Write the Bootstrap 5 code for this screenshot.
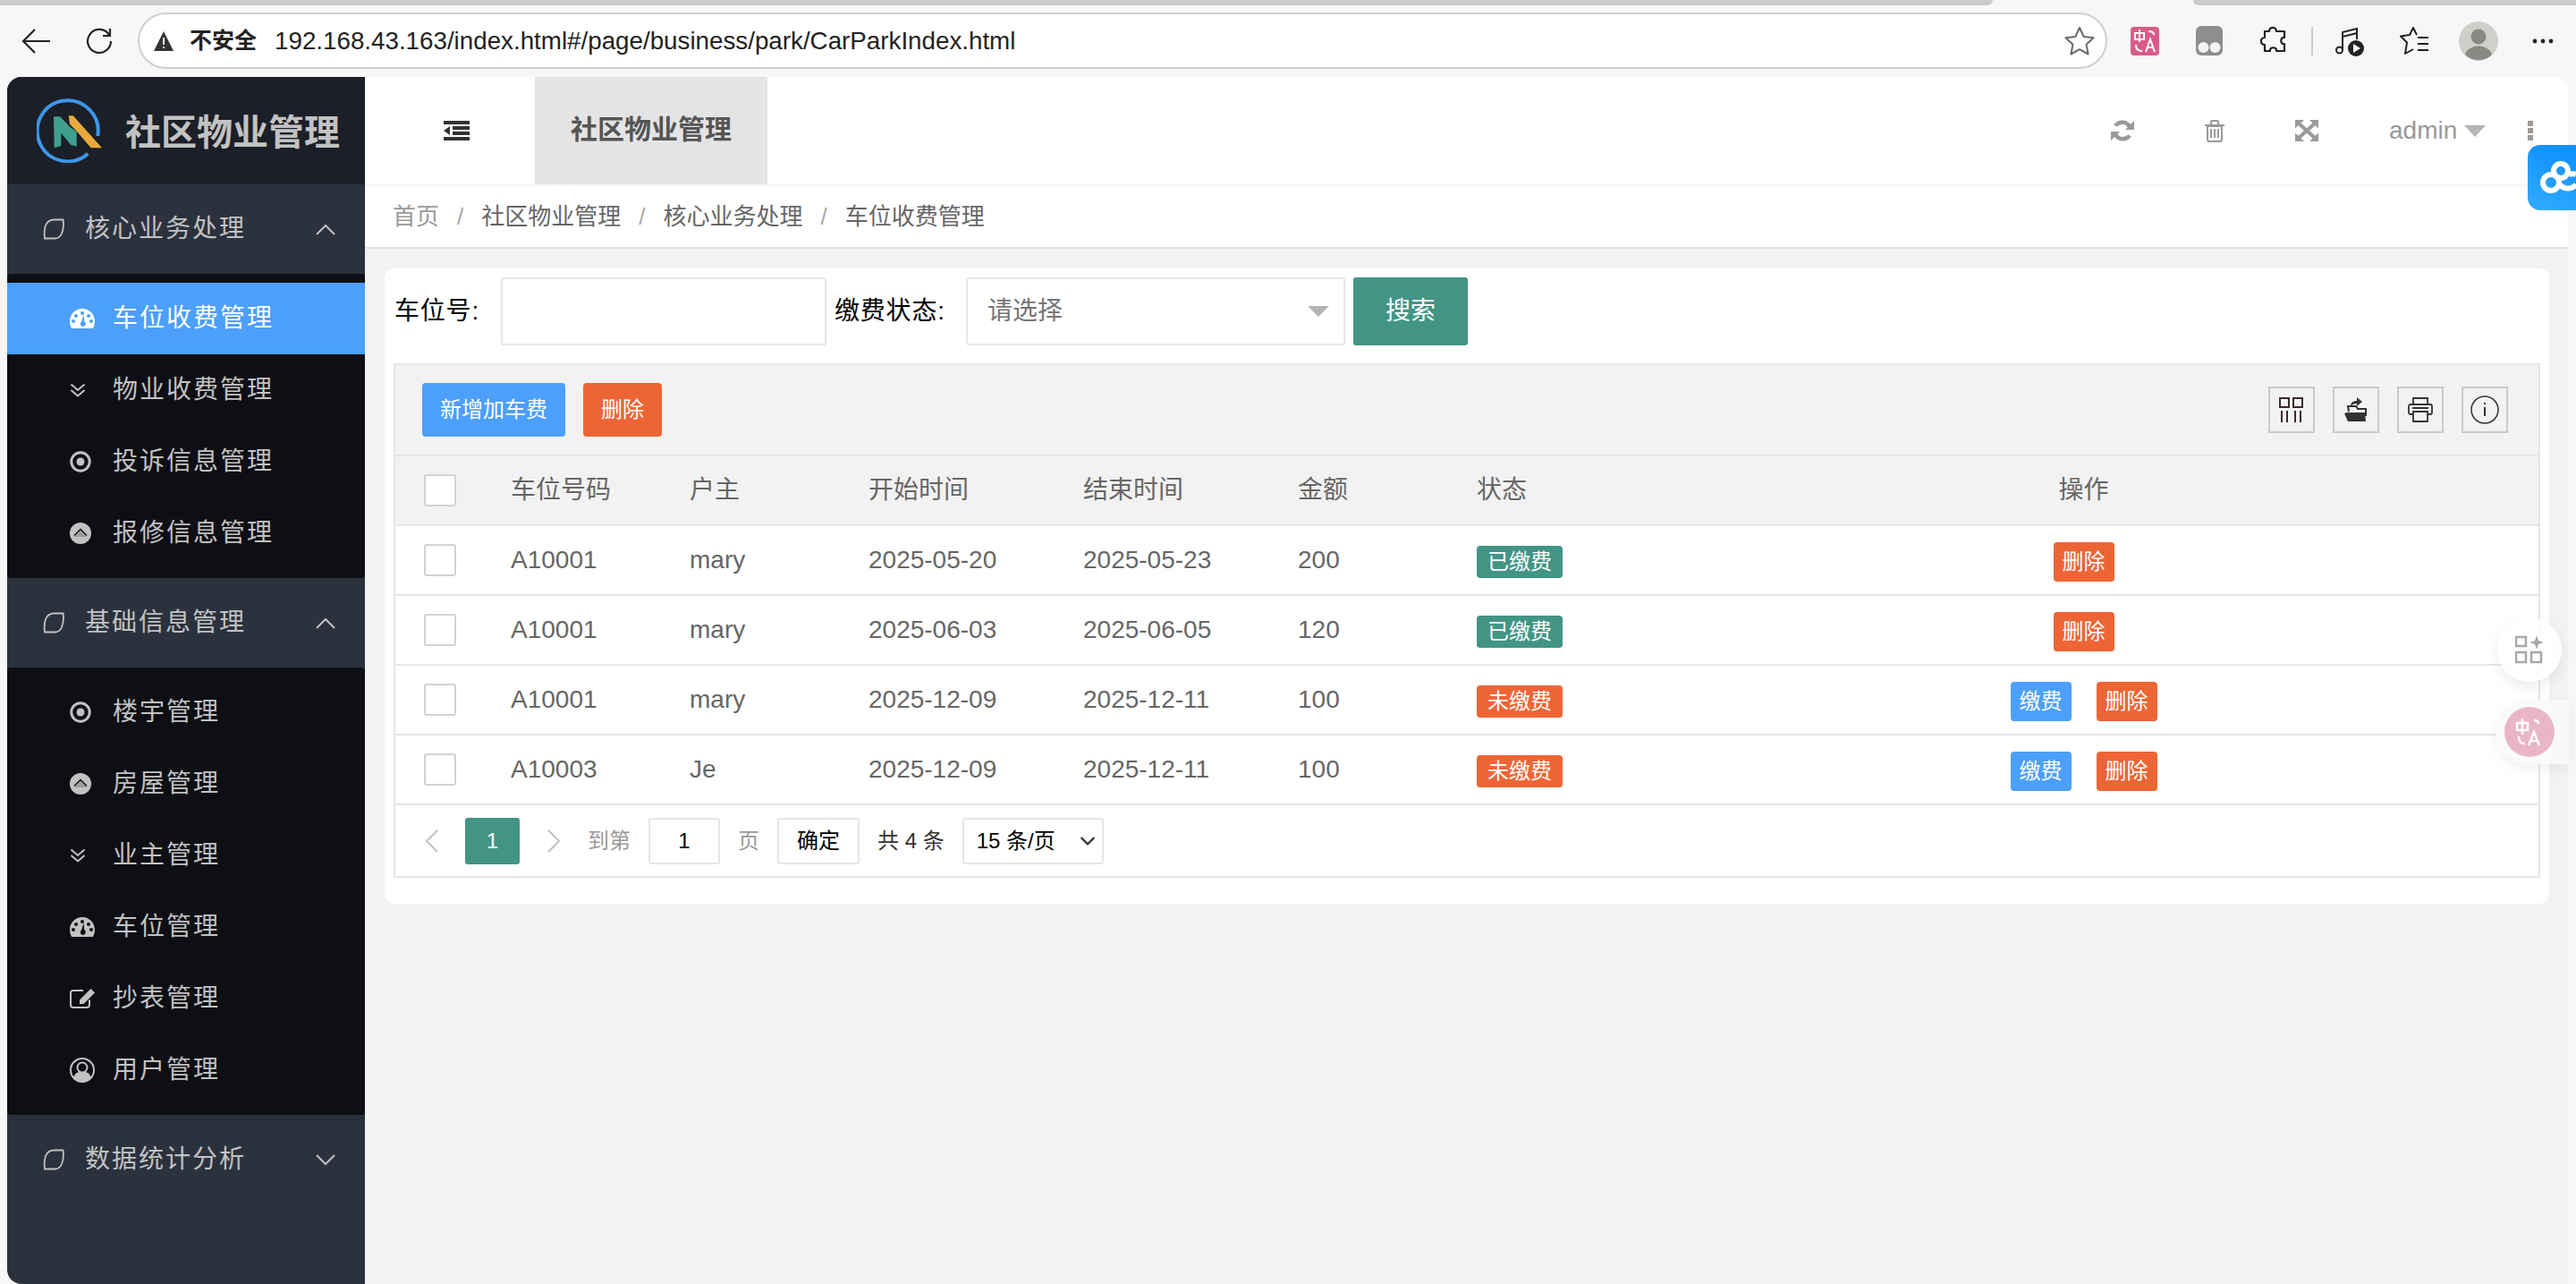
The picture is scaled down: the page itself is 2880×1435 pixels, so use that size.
<!DOCTYPE html>
<html lang="zh-CN">
<head>
  <meta charset="UTF-8">
  <title>社区物业管理</title>
  <link href="https://cdn.jsdelivr.net/npm/bootstrap@5.3.3/dist/css/bootstrap.min.css" rel="stylesheet">
  <style>
    html, body { height: 100%; }
    body { background: #f7f7f7; font-family: "Liberation Sans", "Noto Sans CJK SC", sans-serif; font-size: 28px; color: #666; overflow: hidden; position: relative; }

    /* browser frame */
    .tab-strip { height: 6px; }
    .tab-strip .tab-gray { background: #cbcbcb; }
    .tab-strip .tab-left { width: 2228px; border-bottom-right-radius: 6px; }
    .tab-strip .tab-right { border-bottom-left-radius: 6px; margin-left: 224px; }
    .chrome-bar { height: 80px; padding-top: 8px; padding-bottom: 9px; }
    .chrome-nav { width: 154px; flex: none; }
    .nav-back { margin-left: 24px; }
    .nav-reload { margin-left: 40px; }
    .url-box { width: 2202px; height: 63px; flex: none; background: #fff; border: 2px solid #cfcfcf; border-radius: 32px; padding: 0 12px 0 15px; color: #222; font-size: 27.75px; }
    .url-warn { font-size: 25px; font-weight: 700; margin-left: 17px; margin-right: 20px; }
    .ext-icons { margin-left: 26px; flex: none; }
    .ext-slot { width: 72.5px; flex: none; }
    .ext-div { width: 2px; height: 32px; background: #ccc; flex: none; margin: 0 5px 0 -16px; }
    .ext-wide { width: 72px; flex: none; }
    .app-frame { height: 1349px; padding: 0 9px 0 8px; }

    /* sidebar */
    .side-nav { width: 400px; flex: none; background: #2b323e; border-radius: 16px 0 0 16px; overflow: hidden; color: #c2c2c2; }
    .brand-row { height: 120px; background: #1b1f27; padding-left: 33px; gap: 23px; font-size: 40px; font-weight: 700; }
    .brand-row span { padding-top: 4px; }
    .menu-head { height: 100px; padding-left: 40px; padding-right: 33px; letter-spacing: 2px; }
    .menu-head span { margin-left: 23px; }
    .menu-sub { background: #0d0f14; border-radius: 4px; padding: 10px 0; }
    .menu-item { height: 80px; padding-left: 70px; letter-spacing: 2px; }
    .menu-item.is-on { background: #4c9ffa; color: #fff; }
    .menu-ico { width: 48px; flex: none; }

    /* header */
    .main-pane { min-width: 0; background: #f2f2f2; border-top-right-radius: 16px; }
    .top-bar { height: 122px; flex: none; background: #fff; border-bottom: 2px solid #f5f5f5; border-top-right-radius: 16px; color: #999; }
    .fold-btn { width: 190px; padding-left: 14px; color: #333; }
    .page-tab { width: 260px; background: #e4e4e4; color: #555; font-size: 30px; font-weight: 600; padding-bottom: 3px; }
    .top-tool { width: 103px; }
    .top-user { width: 170px; padding-left: 41px; gap: 8px; }
    .tri-down { width: 0; height: 0; border-style: solid; border-color: #b5b5b5 transparent transparent; border-width: 13px 12px 0; }
    .top-more { width: 71px; padding-right: 14px; }
    .crumb-bar { height: 70px; flex: none; background: #fff; border-bottom: 2px solid #e2e2e2; padding-left: 31px; font-size: 26px; color: #666; }
    .crumb-home { color: #999; }
    .crumb-sep { color: #aaa; margin: 0 20px; }

    /* content */
    .content-area { padding: 22px 21px 0 22px; }
    .panel-box { background: #fff; border-radius: 10px; padding: 10px 10px 29px; }
    .search-row { height: 76px; margin-bottom: 20px; color: #000; }
    .field-lbl { flex: none; padding-left: 1px; letter-spacing: .8px; }
    .lbl-a { width: 120px; }
    .lbl-b { width: 148px; margin-left: 8px; }
    .text-field.form-control { width: 364px; height: 76px; border: 2px solid #e6e6e6; border-radius: 3px; flex: none; font-size: 28px; }
    .pick-field { width: 424px; height: 76px; border: 2px solid #e6e6e6; border-radius: 3px; padding: 0 20px 0 22px; color: #757575; flex: none; background: #fff; }
    .pick-field .tri-down { border-width: 12px 12px 0; margin-right: -4px; }
    .search-btn.btn { width: 128px; height: 76px; margin-left: 9px; background: #429585; border: 0; border-radius: 3px; color: #fff; font-size: 28px; }

    .grid-wrap { border: 2px solid #e6e6e6; }
    .grid-tools { height: 102px; background: #f2f2f2; border-bottom: 2px solid #e6e6e6; padding: 0 34px 0 30px; }
    .tool-btn.btn { height: 60px; border: 0; border-radius: 4px; color: #fff; font-size: 24px; padding: 0; }
    .btn-add { width: 160px; background: #4c9ffa; margin-right: 20px; }
    .btn-del { width: 88px; background: #ee6535; }
    .tool-ico { width: 52px; height: 52px; border: 2px solid #c9c9c9; margin-left: 20px; color: #333; }
    .data-grid.table { table-layout: fixed; margin: 0; border-collapse: separate; border-spacing: 0; --bs-table-color: #666; }
    .data-grid th, .data-grid td { height: 78px; padding: 0 0 0 26px; vertical-align: middle; font-weight: 400; border-bottom: 2px solid #e6e6e6; white-space: nowrap; color: #666; }
    .data-grid thead th { background: #f2f2f2; }
    .data-grid .cell-check, .data-grid td:first-child { width: 103px; padding-left: 32px; }
    .data-grid .cell-wide { width: 200px; }
    .data-grid .cell-time { width: 240px; }
    .data-grid .cell-op { padding-left: 0; padding-right: 4px; text-align: center; }
    .data-grid td.cell-op { padding-top: 4px; }
    .check-box.form-check-input { width: 36px; height: 36px; margin: 0; border: 2px solid #d2d2d2; border-radius: 3px; display: block; }
    .state-tag { display: inline-block; width: 96px; height: 36px; line-height: 35px; border-radius: 4px; color: #fff; font-size: 24px; text-align: center; vertical-align: middle; }
    .tag-paid { background: #429585; }
    .tag-due { background: #ee6535; }
    .row-btn.btn { width: 68px; height: 44px; padding: 0; border: 0; border-radius: 4px; color: #fff; font-size: 24px; line-height: 44px; }
    .btn-pay { background: #4c9ffa; margin-right: 28px; }
    .btn-rm { background: #ee6535; }

    .pager-row { height: 79px; padding-left: 24px; gap: 20px; font-size: 24px; color: #999; }
    .pager-arrow { color: #c2c2c2; }
    .pager-prev { width: 34px; }
    .pager-next { width: 36px; }
    .pager-cur { width: 61px; height: 52px; background: #429585; color: #fff; border-radius: 3px; }
    .pager-input.form-control { width: 80px; height: 52px; padding: 0; border: 2px solid #e6e6e6; border-radius: 3px; text-align: center; font-size: 24px; color: #000; }
    .pager-go.btn { width: 92px; height: 52px; padding: 0; background: #fff; border: 2px solid #e6e6e6; border-radius: 3px; font-size: 24px; color: #000; }
    .pager-total { color: #333; }
    .pager-size.form-select { width: 158px; height: 52px; padding: 0 0 0 14px; border: 2px solid #e6e6e6; border-radius: 3px; font-size: 24px; color: #000; background-position: right 4px center; background-size: 24px 18px; }

    /* things floating over the page */
    .float-cloud { position: absolute; left: 2826px; top: 162px; width: 54px; height: 73px; border-radius: 14px 0 0 14px; background: linear-gradient(200deg, #0a8fff, #33aaff); overflow: hidden; }
    .float-apps { position: absolute; left: 2792px; top: 690px; width: 72px; height: 72px; border-radius: 50%; background: rgba(255,255,255,.85); box-shadow: 0 6px 16px rgba(0,0,0,.08); }
    .float-trans { position: absolute; left: 2790px; top: 782px; width: 82px; height: 72px; border-radius: 36px 0 0 36px; background: rgba(250,250,250,.9); box-shadow: 0 6px 16px rgba(0,0,0,.06); }
    .trans-dot { width: 56px; height: 56px; margin-left: 10px; border-radius: 50%; background: #e9b6c6; }
  </style>
</head>
<body>

<!-- icon set -->
<svg width="0" height="0" class="position-absolute">
  <symbol id="i-leaf" viewBox="0 0 24 24"><path d="M22.500 1.500C23.200 6 23 12 21 17c-1.500 3.500-4 5.500-8 5.500H2C1.500 18 1.500 12 3 8 4.500 4 8 1.500 13 1.500z" fill="none" stroke="currentColor" stroke-width="1.800"/></symbol>
  <symbol id="i-gauge" viewBox="0 0 28 22"><path fill-rule="evenodd" fill="currentColor" d="M14 0C6.300 0 0 6.300 0 14c0 3 .8 5.600 2.200 8h23.600c1.400-2.400 2.200-5 2.200-8C28 6.300 21.700 0 14 0zM14 3a2 2 0 1 1 0 4 2 2 0 0 1 0-4zM7 6a2 2 0 1 1 0 4 2 2 0 0 1 0-4zM21 6a2 2 0 1 1 0 4 2 2 0 0 1 0-4zM4 12a2 2 0 1 1 0 4 2 2 0 0 1 0-4zM24 12a2 2 0 1 1 0 4 2 2 0 0 1 0-4zM15.500 6.500l.8 7.800a3 3 0 1 1-3.200.1z"/></symbol>
  <symbol id="i-dbl" viewBox="0 0 18 16"><path d="M1.500 1.500L9 8l7.500-6.500M1.500 8L9 14.500 16.500 8" fill="none" stroke="currentColor" stroke-width="2"/></symbol>
  <symbol id="i-dot" viewBox="0 0 24 24"><circle cx="12" cy="12" r="10.200" fill="none" stroke="currentColor" stroke-width="3"/><circle cx="12" cy="12" r="4.500" fill="currentColor"/></symbol>
  <symbol id="i-up" viewBox="0 0 24 24"><circle cx="12" cy="12" r="12" fill="currentColor"/><path d="M5 16l7-7 7 7z" fill="#9b9b9b"/><path d="M5 14.500l7-7 7 7" fill="none" stroke="#0d0f14" stroke-width="1.500"/></symbol>
  <symbol id="i-edit" viewBox="0 0 28 22"><path d="M22 12.500V18a3 3 0 0 1-3 3H4a3 3 0 0 1-3-3V5a3 3 0 0 1 3-3h11" fill="none" stroke="currentColor" stroke-width="2"/><path fill="currentColor" d="M23.500 0L28 4.500 15.500 17H11v-4.500z"/></symbol>
  <symbol id="i-user" viewBox="0 0 28 28"><circle cx="14" cy="14" r="13" fill="none" stroke="currentColor" stroke-width="2"/><circle cx="14" cy="11" r="5.500" fill="none" stroke="currentColor" stroke-width="2"/><path fill="currentColor" d="M4 22c2-4.500 5-6 7-6 1.800 1 4.200 1 6 0 2 0 5 1.500 7 6-2.500 3.500-6 5.500-10 5.500S6.500 25.500 4 22z"/></symbol>
</svg>

<!-- browser bar -->
<div class="tab-strip d-flex">
  <div class="tab-gray tab-left"></div>
  <div class="tab-gray tab-right flex-grow-1"></div>
</div>
<div class="chrome-bar d-flex align-items-start">
  <div class="chrome-nav d-flex align-items-center h-100">
    <svg class="nav-back" width="32" height="30" viewBox="0 0 32 30"><path d="M15 2L2 15l13 13M2 15h30" fill="none" stroke="#222" stroke-width="2.200"/></svg>
    <svg class="nav-reload" width="30" height="30" viewBox="0 0 30 30"><path d="M26 8A13 13 0 1 0 28 15M27 1v8h-8" fill="none" stroke="#222" stroke-width="2.200"/></svg>
  </div>
  <div class="url-box d-flex align-items-center">
    <svg width="24" height="24" viewBox="0 0 24 24"><path d="M12 1L23 23H1z" fill="#333"/><path d="M11 8h2v8h-2zM11 18h2v2h-2z" fill="#fff"/></svg>
    <span class="url-warn">不安全</span>
    <span class="flex-grow-1">192.168.43.163/index.html#/page/business/park/CarParkIndex.html</span>
    <svg width="34" height="33" viewBox="0 0 34 33"><path d="M17 2l4.700 10 10.800 1.300-8 7.400 2.100 10.800L17 26.200 7.400 31.500l2.100-10.800-8-7.400L12.300 12z" fill="none" stroke="#6a6a6a" stroke-width="2" stroke-linejoin="round"/></svg>
  </div>
  <div class="ext-icons d-flex align-items-center h-100">
    <div class="ext-slot d-flex">
      <svg width="32" height="32" viewBox="0 0 32 32"><rect width="32" height="32" rx="4" fill="#d85c8a"/><path d="M5 7h10v7H5zM10 3v14M20 5c4 0 6 1 6 4M6 20c0 5 2 7 7 7M17 28l5-14 5 14M19 23h6" fill="none" stroke="#fff" stroke-width="2"/></svg>
    </div>
    <div class="ext-slot d-flex">
      <svg width="30" height="33" viewBox="0 0 30 33"><rect width="30" height="33" rx="6" fill="#8e8e8e"/><circle cx="8.500" cy="24" r="6" fill="#f4f4f4"/><circle cx="21.500" cy="24" r="6" fill="#f4f4f4"/></svg>
    </div>
    <div class="ext-slot d-flex">
      <svg width="29" height="33" viewBox="0 0 29 33"><path d="M10 6c0-5.500 8-5.500 8 0h9v7c-5-1-5 8 0 7v8h-9c1-5-8-5-7 0H5v-7c-5.500 0-5.500-8 0-8V6z" fill="none" stroke="#222" stroke-width="2.200" stroke-linejoin="round"/></svg>
    </div>
    <div class="ext-div"></div>
    <div class="ext-wide d-flex justify-content-center">
      <svg width="32" height="34" viewBox="0 0 32 34"><path d="M8 26V7L24 3v12M8 12l16-4" fill="none" stroke="#222" stroke-width="2"/><circle cx="4.500" cy="27" r="3.500" fill="none" stroke="#222" stroke-width="2"/><circle cx="23" cy="25" r="9" fill="#222"/><path d="M20 20l8 5-8 5z" fill="#fff"/></svg>
    </div>
    <div class="ext-wide d-flex justify-content-center">
      <svg width="32" height="32" viewBox="0 0 32 32"><path d="M19 9L15 1l-4 8-10 1.500 7 7L6 30l9-5M20 12h12M20 19h12M20 26h12" fill="none" stroke="#222" stroke-width="2" stroke-linejoin="round"/></svg>
    </div>
    <div class="ext-wide d-flex justify-content-center">
      <svg width="44" height="44" viewBox="0 0 44 44"><circle cx="22" cy="22" r="22" fill="#cfcfcc"/><circle cx="22" cy="17" r="8.500" fill="#888885"/><path d="M7 37c2-7 9-9.500 15-9.500S35 30 37 37a22 22 0 0 1-30 0z" fill="#888885"/></svg>
    </div>
    <div class="ext-wide d-flex justify-content-center">
      <svg width="24" height="6" viewBox="0 0 24 6"><circle cx="3" cy="3" r="2.400" fill="#222"/><circle cx="12" cy="3" r="2.400" fill="#222"/><circle cx="21" cy="3" r="2.400" fill="#222"/></svg>
    </div>
  </div>
</div>

<!-- app window -->
<div class="app-frame d-flex">
  <aside class="side-nav d-flex flex-column">
    <div class="brand-row d-flex align-items-center">
      <svg width="76" height="72" viewBox="0 0 76 72">
        <path d="M57.300 61.700A34 34 0 1 1 68.200 42" fill="none" stroke="#3d97ea" stroke-width="4"/>
        <path d="M19 20.300h7.300L37.300 32l7.400 5v16.700L38.300 52 27.300 38.700V53l-7.600 2.300z" fill="#3f9f90"/>
        <path d="M35.700 19.300h5L73 55.300H60.700L45 37l-8-8.300z" fill="#e9a93c"/>
      </svg>
      <span>社区物业管理</span>
    </div>

    <div class="menu-head d-flex align-items-center">
      <svg width="24" height="24"><use href="#i-leaf"/></svg>
      <span class="flex-grow-1">核心业务处理</span>
      <svg width="22" height="13" viewBox="0 0 22 13"><path d="M1 12L11 2l10 10" fill="none" stroke="currentColor" stroke-width="2"/></svg>
    </div>
    <div class="menu-sub">
      <div class="menu-item is-on d-flex align-items-center"><div class="menu-ico d-flex"><svg width="28" height="22"><use href="#i-gauge"/></svg></div>车位收费管理</div>
      <div class="menu-item d-flex align-items-center"><div class="menu-ico d-flex"><svg width="18" height="16"><use href="#i-dbl"/></svg></div>物业收费管理</div>
      <div class="menu-item d-flex align-items-center"><div class="menu-ico d-flex"><svg width="24" height="24"><use href="#i-dot"/></svg></div>投诉信息管理</div>
      <div class="menu-item d-flex align-items-center"><div class="menu-ico d-flex"><svg width="24" height="24"><use href="#i-up"/></svg></div>报修信息管理</div>
    </div>

    <div class="menu-head d-flex align-items-center">
      <svg width="24" height="24"><use href="#i-leaf"/></svg>
      <span class="flex-grow-1">基础信息管理</span>
      <svg width="22" height="13" viewBox="0 0 22 13"><path d="M1 12L11 2l10 10" fill="none" stroke="currentColor" stroke-width="2"/></svg>
    </div>
    <div class="menu-sub">
      <div class="menu-item d-flex align-items-center"><div class="menu-ico d-flex"><svg width="24" height="24"><use href="#i-dot"/></svg></div>楼宇管理</div>
      <div class="menu-item d-flex align-items-center"><div class="menu-ico d-flex"><svg width="24" height="24"><use href="#i-up"/></svg></div>房屋管理</div>
      <div class="menu-item d-flex align-items-center"><div class="menu-ico d-flex"><svg width="18" height="16"><use href="#i-dbl"/></svg></div>业主管理</div>
      <div class="menu-item d-flex align-items-center"><div class="menu-ico d-flex"><svg width="28" height="22"><use href="#i-gauge"/></svg></div>车位管理</div>
      <div class="menu-item d-flex align-items-center"><div class="menu-ico d-flex"><svg width="28" height="22"><use href="#i-edit"/></svg></div>抄表管理</div>
      <div class="menu-item d-flex align-items-center"><div class="menu-ico d-flex"><svg width="28" height="28"><use href="#i-user"/></svg></div>用户管理</div>
    </div>

    <div class="menu-head d-flex align-items-center">
      <svg width="24" height="24"><use href="#i-leaf"/></svg>
      <span class="flex-grow-1">数据统计分析</span>
      <svg width="22" height="13" viewBox="0 0 22 13"><path d="M1 1l10 10L21 1" fill="none" stroke="currentColor" stroke-width="2"/></svg>
    </div>
  </aside>

  <main class="main-pane flex-grow-1 d-flex flex-column">
    <div class="top-bar d-flex align-items-stretch">
      <div class="fold-btn d-flex align-items-center justify-content-center">
        <svg width="29" height="22" viewBox="0 0 29 22"><path d="M0 0h29v4H0zM10 6h19v4H10zM10 12h19v4H10zM0 18h29v4H0zM7 6v10l-7-5z" fill="currentColor"/></svg>
      </div>
      <div class="page-tab d-flex align-items-center justify-content-center">社区物业管理</div>
      <div class="ms-auto d-flex align-items-stretch">
        <div class="top-tool d-flex align-items-center justify-content-center">
          <svg width="26" height="24" viewBox="0 0 26 24"><path d="M21.500 9A9.500 9.500 0 0 0 5 6.500M4.500 15A9.500 9.500 0 0 0 21 17.500" fill="none" stroke="currentColor" stroke-width="4.500"/><path d="M26 1v10H16zM0 23V13h10z" fill="currentColor"/></svg>
        </div>
        <div class="top-tool d-flex align-items-center justify-content-center">
          <svg width="22" height="25" viewBox="0 0 22 25"><path d="M3 7h16v15a2 2 0 0 1-2 2H5a2 2 0 0 1-2-2zM0 6h22M7 5V2a1 1 0 0 1 1-1h6a1 1 0 0 1 1 1v3" fill="none" stroke="currentColor" stroke-width="2"/><path d="M7 10v10M11 10v10M15 10v10" fill="none" stroke="currentColor" stroke-width="2"/></svg>
        </div>
        <div class="top-tool d-flex align-items-center justify-content-center">
          <svg width="26" height="24" viewBox="0 0 26 24"><path d="M0 0h10L0 9.500zM26 0H16l10 9.500zM0 24h10L0 14.500zM26 24H16l10-9.500z" fill="currentColor"/><path d="M3 3l20 18M23 3L3 21" fill="none" stroke="currentColor" stroke-width="4"/></svg>
        </div>
        <div class="top-user d-flex align-items-center">admin<span class="tri-down"></span></div>
        <div class="top-more d-flex align-items-center justify-content-center">
          <svg width="6" height="22" viewBox="0 0 6 22"><path d="M0 0h6v6H0zM0 8h6v6H0zM0 16h6v6H0z" fill="#a09a96"/></svg>
        </div>
      </div>
    </div>

    <div class="crumb-bar d-flex align-items-center">
      <span class="crumb-home">首页</span><span class="crumb-sep">/</span>
      <span>社区物业管理</span><span class="crumb-sep">/</span>
      <span>核心业务处理</span><span class="crumb-sep">/</span>
      <span>车位收费管理</span>
    </div>

    <div class="content-area">
      <div class="panel-box">
        <form class="search-row d-flex align-items-center">
          <div class="field-lbl lbl-a">车位号:</div>
          <input type="text" class="form-control text-field">
          <div class="field-lbl lbl-b">缴费状态:</div>
          <div class="pick-field d-flex align-items-center justify-content-between">
            <span>请选择</span><span class="tri-down"></span>
          </div>
          <button type="button" class="btn search-btn">搜索</button>
        </form>

        <div class="grid-wrap">
          <div class="grid-tools d-flex align-items-center">
            <button type="button" class="btn tool-btn btn-add">新增加车费</button>
            <button type="button" class="btn tool-btn btn-del">删除</button>
            <div class="ms-auto d-flex">
              <div class="tool-ico d-flex align-items-center justify-content-center">
                <svg width="28" height="28" viewBox="0 0 28 28"><path d="M1 1h10v10H1zM16 1h10v10H16zM3 15v13M9 15v13M18 15v13M24 15v13" fill="none" stroke="#3a2a2a" stroke-width="2"/></svg>
              </div>
              <div class="tool-ico d-flex align-items-center justify-content-center">
                <svg width="26" height="28" viewBox="0 0 26 28"><path d="M5 16l-1-6h9l2 3h9v8" fill="none" stroke="#333" stroke-width="2"/><path d="M3 17h20l1 10H4L0 18z" fill="#333"/><path d="M7 10c0-4 3-6 7-6V0l6 5-6 5V7c-3 0-5 1-7 3z" fill="#333"/></svg>
              </div>
              <div class="tool-ico d-flex align-items-center justify-content-center">
                <svg width="28" height="28" viewBox="0 0 28 28"><path d="M6 8V1h16v7M6 19H3a2 2 0 0 1-2-2V10a2 2 0 0 1 2-2h22a2 2 0 0 1 2 2v7a2 2 0 0 1-2 2h-3M6 16h16v11H6zM5 12h18" fill="none" stroke="#333" stroke-width="1.800"/></svg>
              </div>
              <div class="tool-ico d-flex align-items-center justify-content-center">
                <svg width="32" height="32" viewBox="0 0 32 32"><circle cx="16" cy="16" r="15" fill="none" stroke="#333" stroke-width="1.500"/><path d="M15 13h2v10h-2zM15 8h2v2h-2z" fill="#333"/></svg>
              </div>
            </div>
          </div>

          <table class="table data-grid">
            <thead>
              <tr>
                <th class="cell-check"><input type="checkbox" class="form-check-input check-box"></th>
                <th class="cell-wide">车位号码</th>
                <th class="cell-wide">户主</th>
                <th class="cell-time">开始时间</th>
                <th class="cell-time">结束时间</th>
                <th class="cell-wide">金额</th>
                <th class="cell-wide">状态</th>
                <th class="cell-op">操作</th>
              </tr>
            </thead>
            <tbody>
              <tr>
                <td><input type="checkbox" class="form-check-input check-box"></td>
                <td>A10001</td><td>mary</td><td>2025-05-20</td><td>2025-05-23</td><td>200</td>
                <td><span class="state-tag tag-paid">已缴费</span></td>
                <td class="cell-op"><button type="button" class="btn row-btn btn-rm">删除</button></td>
              </tr>
              <tr>
                <td><input type="checkbox" class="form-check-input check-box"></td>
                <td>A10001</td><td>mary</td><td>2025-06-03</td><td>2025-06-05</td><td>120</td>
                <td><span class="state-tag tag-paid">已缴费</span></td>
                <td class="cell-op"><button type="button" class="btn row-btn btn-rm">删除</button></td>
              </tr>
              <tr>
                <td><input type="checkbox" class="form-check-input check-box"></td>
                <td>A10001</td><td>mary</td><td>2025-12-09</td><td>2025-12-11</td><td>100</td>
                <td><span class="state-tag tag-due">未缴费</span></td>
                <td class="cell-op"><button type="button" class="btn row-btn btn-pay">缴费</button><button type="button" class="btn row-btn btn-rm">删除</button></td>
              </tr>
              <tr>
                <td><input type="checkbox" class="form-check-input check-box"></td>
                <td>A10003</td><td>Je</td><td>2025-12-09</td><td>2025-12-11</td><td>100</td>
                <td><span class="state-tag tag-due">未缴费</span></td>
                <td class="cell-op"><button type="button" class="btn row-btn btn-pay">缴费</button><button type="button" class="btn row-btn btn-rm">删除</button></td>
              </tr>
            </tbody>
          </table>

          <div class="pager-row d-flex align-items-center">
            <div class="pager-prev pager-arrow d-flex justify-content-center">
              <svg width="16" height="26" viewBox="0 0 16 26"><path d="M14 1L2 13l12 12" fill="none" stroke="currentColor" stroke-width="2"/></svg>
            </div>
            <div class="pager-cur d-flex align-items-center justify-content-center">1</div>
            <div class="pager-next pager-arrow d-flex justify-content-center">
              <svg width="16" height="26" viewBox="0 0 16 26"><path d="M2 1l12 12L2 25" fill="none" stroke="currentColor" stroke-width="2"/></svg>
            </div>
            <span>到第</span>
            <input type="text" class="form-control pager-input" value="1">
            <span>页</span>
            <button type="button" class="btn pager-go">确定</button>
            <span class="pager-total">共 4 条</span>
            <select class="form-select pager-size"><option>15 条/页</option></select>
          </div>
        </div>
      </div>
    </div>
  </main>
</div>

<!-- floating browser widgets -->
<div class="float-cloud">
  <svg width="54" height="73" viewBox="0 0 54 73"><g fill="none" stroke="#fff" stroke-width="6"><circle cx="37" cy="29" r="8"/><circle cx="26" cy="42" r="9"/><path d="M36 44c4 6 14 6 18 0"/><path d="M46 33c3-1 6-1 8 0"/></g></svg>
</div>
<div class="float-apps d-flex align-items-center justify-content-center">
  <svg width="32" height="32" viewBox="0 0 32 32"><path d="M1 2h11v10H1zM1 19h11v11H1zM18 19h11v11H18z" fill="none" stroke="#a8a8a8" stroke-width="2.500"/><path d="M24 0l2 6 6 2-6 2-2 6-2-6-6-2 6-2z" fill="#a8a8a8"/></svg>
</div>
<div class="float-trans d-flex align-items-center">
  <div class="trans-dot d-flex align-items-center justify-content-center">
    <svg width="34" height="34" viewBox="0 0 34 34"><path d="M3 7h12v8H3zM9 2v18M22 4c4 0 5 2 5 4M5 22c0 6 2 8 7 8M16 32l6-15 6 15M18 27h8" fill="none" stroke="#fff" stroke-width="2.500"/></svg>
  </div>
</div>

</body>
</html>
